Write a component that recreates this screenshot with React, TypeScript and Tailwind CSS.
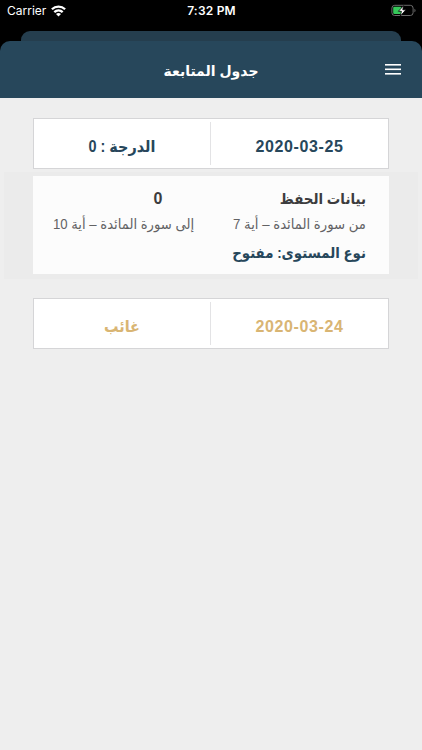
import clsx from "clsx";

const records = [
  {
    date: "2020-03-25",
    label: "الدرجة : ",
    score: "0",
    absent: false,
    details: {
      title: "بيانات الحفظ",
      score: "0",
      from: "من سورة المائدة – أية ",
      fromVerse: "7",
      to: "إلى سورة المائدة – أية ",
      toVerse: "10",
      level: "نوع المستوى: مفتوح",
    },
  },
  { date: "2020-03-24", label: "غائب", score: "", absent: true },
];

function StatusBar() {
  return (
    <div
      dir="ltr"
      className="flex h-[31px] items-start justify-between bg-black pt-[3px] pr-[6px] pl-[7px] font-['Inter','Liberation_Sans',sans-serif] text-white"
    >
      <div className="flex w-[160px] items-center gap-[5px]">
        <span className="text-[12px] leading-4">Carrier</span>
        <svg width="15" height="12" viewBox="0 0 15 12" fill="none" stroke="white" strokeWidth="2.3">
          <path d="M0.9 4.3C4.6 0.7 10.4 0.7 14.1 4.3" />
          <path d="M3.3 7.1C5.7 4.9 9.3 4.9 11.7 7.1" />
          <path d="M5 8.9C6.5 7.7 8.5 7.7 10 8.9L7.5 11.4Z" fill="white" stroke="none" />
        </svg>
      </div>
      <span className="text-[12px] leading-4 font-semibold tracking-[0.2px] whitespace-nowrap">7:32 PM</span>
      <div className="flex w-[160px] justify-end">
        <svg width="26" height="13" viewBox="0 0 26 13" className="mt-[1px]">
          <rect x="1.9" y="1.3" width="21.2" height="10.2" rx="2.8" fill="none" stroke="#777" strokeWidth="0.9" />
          <path d="M24.5 4.7C25.8 5.5 25.8 7.5 24.5 8.3Z" fill="#777" />
          <rect x="3.2" y="2.7" width="8.3" height="7.4" rx="1.3" fill="#35c759" />
          <path d="M13.6 1.6L8.4 7.3H11.4L10.4 12L15.9 5.8H12.8Z" fill="white" stroke="black" strokeWidth="0.8" />
        </svg>
      </div>
    </div>
  );
}

function Header() {
  return (
    <>
      <div className="bg-black px-[21px]">
        <div className="h-[10px] rounded-t-[9px] bg-[#253e4e]" />
      </div>
      <div className="bg-black">
        <header className="grid h-[57px] grid-cols-[60px_1fr_60px] items-center rounded-t-[10px] bg-[#27475b] text-white">
          <div className="flex pr-[21px]">
            <svg width="16" height="12" viewBox="0 0 16 12" fill="white">
              <rect y="0" width="16" height="1.6" />
              <rect y="4.5" width="16" height="1.6" />
              <rect y="9" width="16" height="1.6" />
            </svg>
          </div>
          <h1 className="pt-[4px] text-center text-[14px] font-bold whitespace-nowrap">جدول المتابعة</h1>
          <div />
        </header>
      </div>
    </>
  );
}

export default function App() {
  return (
    <div
      dir="rtl"
      className="h-[750px] w-[422px] overflow-hidden bg-[#eeeeee] font-['Liberation_Sans','DejaVu_Sans',sans-serif]"
    >
      <StatusBar />
      <Header />
      <main className="pt-[20px]">
        {records.map((item) => (
          <section key={item.date}>
            <div
              className={clsx(
                "mx-[33px] flex h-[51px] items-center border border-[#d5d5d7] bg-white text-[16px] font-bold",
                item.absent ? "text-[#d9b573]" : "text-[#27475b]"
              )}
            >
              <div dir="ltr" className="w-[177px] pt-[6px] text-center tracking-[0.6px]">
                {item.date}
              </div>
              <div className="h-[43px] w-px bg-[#e3e3e5]" />
              <div className="flex-1 scale-x-[0.9] pt-[6px] text-center whitespace-nowrap">
                {item.label}
                {item.score}
              </div>
            </div>
            {item.details && (
              <div className="mx-[4px] mt-[3px] mb-[19px] bg-[#ebebeb] px-[29px] pt-[4px] pb-[5px]">
                <div className="h-[98px] bg-[#fcfcfc] pt-[11px] pr-[23px] pl-[20px] text-[#3c3c3e]">
                  <div className="flex h-[24px] items-center text-[15px] font-bold">
                    <div className="w-[171px] origin-right scale-x-[0.895] whitespace-nowrap">
                      {item.details.title}
                    </div>
                    <div className="w-[74px] text-center text-[16px]">{item.details.score}</div>
                  </div>
                  <div className="flex h-[26px] items-center text-[14px] text-[#626264]">
                    <div className="w-[171px] origin-right scale-x-[0.945] whitespace-nowrap">
                      {item.details.from}
                      {item.details.fromVerse}
                    </div>
                    <div className="-mr-[8px] origin-left scale-x-[0.94] whitespace-nowrap">
                      {item.details.to}
                      {item.details.toVerse}
                    </div>
                  </div>
                  <div className="flex h-[32px] origin-right scale-x-[0.89] items-center text-[15px] font-bold whitespace-nowrap text-[#27475b]">
                    {item.details.level}
                  </div>
                </div>
              </div>
            )}
          </section>
        ))}
      </main>
    </div>
  );
}
